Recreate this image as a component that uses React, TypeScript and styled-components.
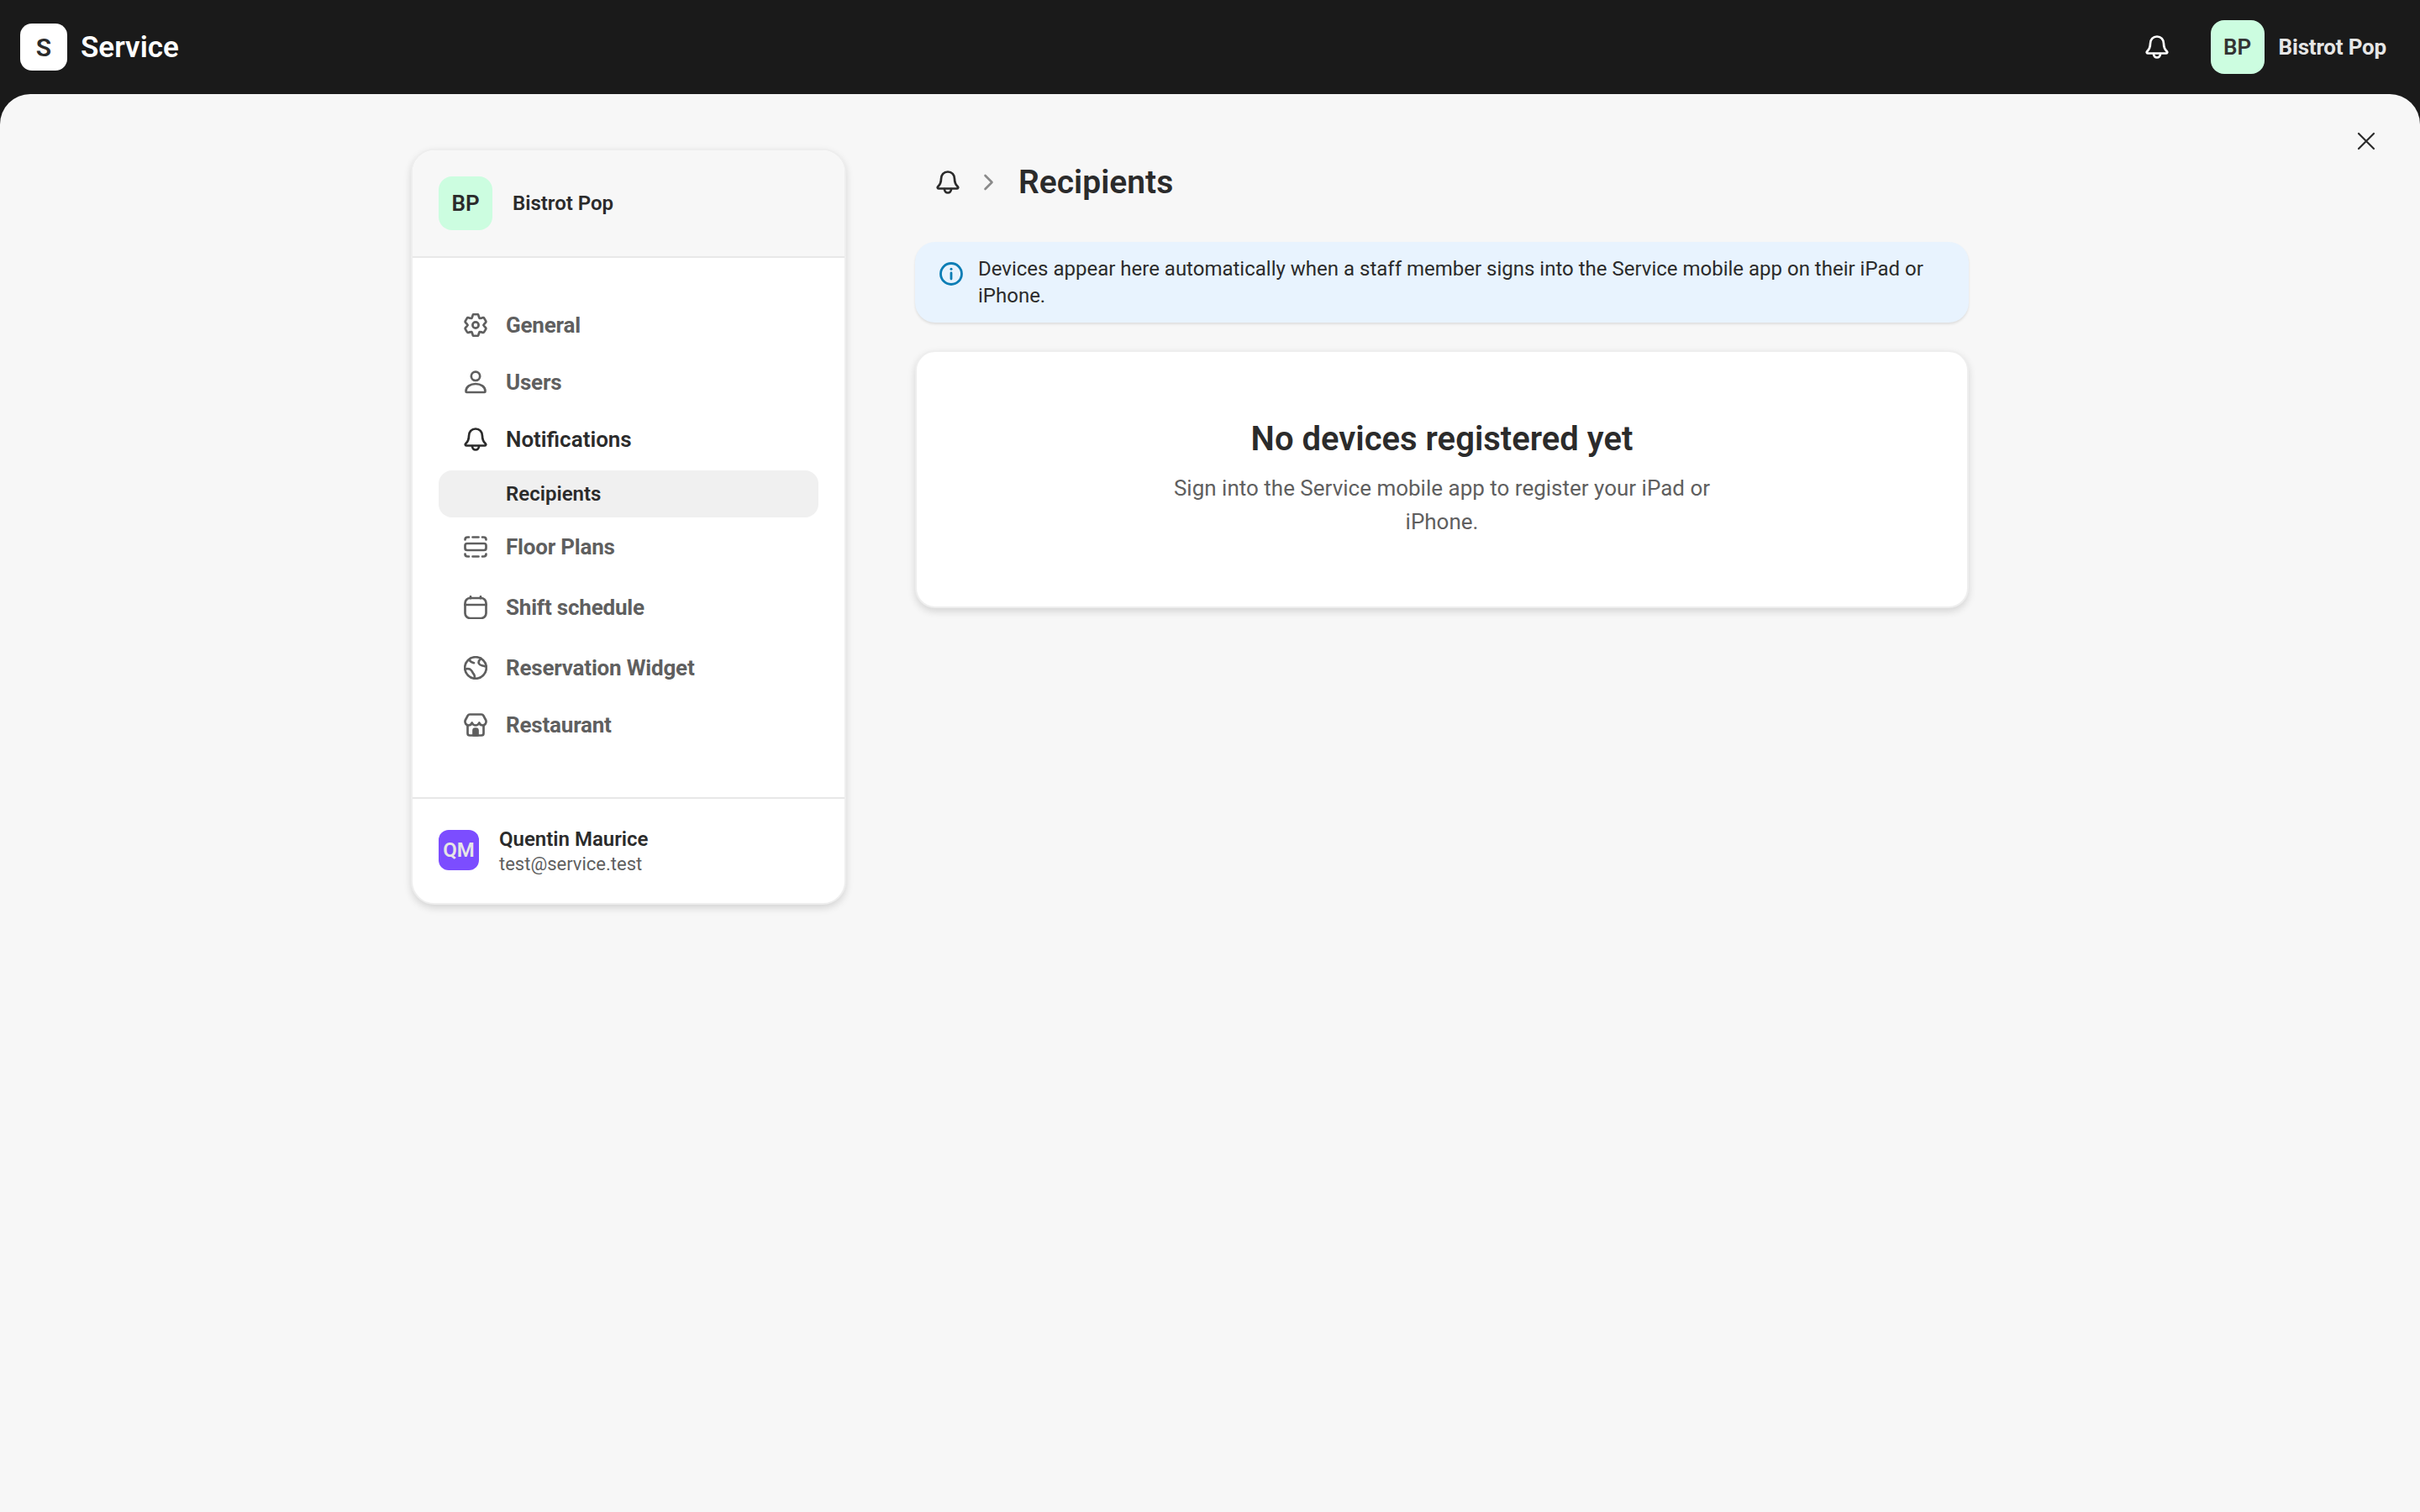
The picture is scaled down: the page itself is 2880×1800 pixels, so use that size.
import React from "react";
import styled, { createGlobalStyle } from "styled-components";

const GlobalStyle = createGlobalStyle`
  html, body {
    margin: 0;
    padding: 0;
    height: 100%;
    background: #1a1a1a;
    font-family: Roboto, "Liberation Sans", sans-serif;
  }
  * { box-sizing: border-box; }
`;

const Page = styled.div`
  width: 2880px;
  height: 1800px;
  display: flex;
  flex-direction: column;
  background: #1a1a1a;
  overflow: hidden;
`;

const TopBar = styled.header`
  height: 112px;
  flex: none;
  display: flex;
  align-items: center;
  justify-content: space-between;
  padding: 0 40px 0 24px;
`;

const Brand = styled.div`
  display: flex;
  align-items: center;
  gap: 16px;
`;

const LogoMark = styled.div`
  width: 56px;
  height: 56px;
  border-radius: 14px;
  background: #fff;
  color: #2b2b2b;
  display: flex;
  align-items: center;
  justify-content: center;
  font-size: 30px;
  font-weight: 600;
`;

const BrandName = styled.span`
  color: #fff;
  font-size: 35px;
  font-weight: 600;
`;

const TopRight = styled.div`
  display: flex;
  align-items: center;
`;

const TopBell = styled.div`
  color: #fff;
  display: flex;
  margin-right: 50px;
`;

const Avatar = styled.div<{ $size: number; $bg: string; $fg: string; $font: number; $radius: number }>`
  width: ${(p) => p.$size}px;
  height: ${(p) => p.$size}px;
  flex: none;
  border-radius: ${(p) => p.$radius}px;
  background: ${(p) => p.$bg};
  color: ${(p) => p.$fg};
  font-size: ${(p) => p.$font}px;
  font-weight: 600;
  display: flex;
  align-items: center;
  justify-content: center;
`;

const TopName = styled.span`
  color: #e6e6e6;
  font-size: 26px;
  font-weight: 700;
  letter-spacing: -0.2px;
  margin-left: 17px;
`;

const Sheet = styled.main`
  flex: 1;
  position: relative;
  background: #f7f7f7;
  border-radius: 36px 36px 0 0;
  display: flex;
  align-items: flex-start;
  padding: 65px 0 0 489px;
  gap: 82px;
`;

const CloseButton = styled.div`
  position: absolute;
  top: 45px;
  right: 53px;
  display: flex;
  color: #2b2b2b;
`;

const SideCard = styled.aside`
  width: 518px;
  flex: none;
  background: #fff;
  border: 2px solid #eeeeee;
  border-radius: 28px;
  box-shadow: 0 4px 10px rgba(0, 0, 0, 0.14);
  overflow: hidden;
`;

const SideHeader = styled.div`
  height: 128px;
  background: #f7f7f7;
  border-bottom: 2px solid #e8e8e8;
  display: flex;
  align-items: center;
  gap: 24px;
  padding: 0 30px 0 31px;
`;

const SideTitle = styled.span`
  font-size: 24px;
  font-weight: 600;
  color: #2b2b2b;
`;

const Nav = styled.nav`
  padding: 46px 31px 53px;
  display: flex;
  flex-direction: column;
`;

const NavRow = styled.div<{ $h: number; $active?: boolean }>`
  height: ${(p) => p.$h}px;
  display: flex;
  align-items: center;
  color: ${(p) => (p.$active ? "#2b2b2b" : "#5f5f5f")};
  font-size: 26px;
  font-weight: ${(p) => (p.$active ? 600 : 700)};
  letter-spacing: ${(p) => (p.$active ? "0" : "-0.2px")};
`;

const NavIcon = styled.div`
  width: 80px;
  flex: none;
  display: flex;
  justify-content: center;
  padding-left: 8px;
`;

const SubRow = styled.div`
  height: 56px;
  margin-top: 3px;
  padding-left: 80px;
  display: flex;
  align-items: center;
  background: #f0f0f0;
  border-radius: 16px;
  color: #2b2b2b;
  font-size: 24px;
  font-weight: 600;
`;

const SideFooter = styled.div`
  height: 126px;
  border-top: 2px solid #e8e8e8;
  display: flex;
  align-items: center;
  gap: 24px;
  padding: 0 31px 3px;
`;

const FooterText = styled.div`
  display: flex;
  flex-direction: column;
  gap: 3px;
  padding-top: 3px;
`;

const FooterName = styled.span`
  font-size: 24px;
  font-weight: 600;
  color: #2b2b2b;
`;

const FooterMail = styled.span`
  font-size: 22px;
  font-weight: 400;
  color: #5f5f5f;
`;

const Content = styled.section`
  width: 1254px;
  flex: none;
  display: flex;
  flex-direction: column;
`;

const Crumbs = styled.div`
  height: 111px;
  padding-left: 25px;
  display: flex;
  align-items: flex-start;
  color: #2b2b2b;
`;

const CrumbIcons = styled.div`
  display: flex;
  align-items: center;
  height: 80px;
  gap: 28px;
`;

const CrumbTitle = styled.h1`
  margin: 0 0 0 29px;
  font-size: 39px;
  line-height: 80px;
  font-weight: 600;
  color: #2b2b2b;
`;

const Notice = styled.div`
  height: 96px;
  background: #e8f3fe;
  border-radius: 24px;
  box-shadow: 0 2px 3px rgba(0, 0, 0, 0.1);
  display: flex;
  gap: 18px;
  padding: 16px 40px 0 29px;
  color: #2b2b2b;
  font-size: 24px;
  line-height: 32px;
`;

const NoticeIcon = styled.div`
  margin-top: 8px;
  color: #0b7db5;
  display: flex;
  flex: none;
`;

const EmptyCard = styled.div`
  margin-top: 33px;
  height: 307px;
  background: #fff;
  border: 2px solid #eeeeee;
  border-radius: 24px;
  box-shadow: 0 4px 10px rgba(0, 0, 0, 0.14);
  display: flex;
  flex-direction: column;
  align-items: center;
  padding-top: 76px;
`;

const EmptyTitle = styled.h2`
  margin: 0;
  font-size: 40px;
  line-height: 56px;
  font-weight: 600;
  color: #2b2b2b;
`;

const EmptyText = styled.p`
  margin: 10px 0 0;
  width: 680px;
  text-align: center;
  font-size: 26px;
  line-height: 40px;
  color: #5f5f5f;
`;

const Stroke = styled.svg`
  fill: none;
  stroke: currentColor;
  stroke-linecap: round;
  stroke-linejoin: round;
  display: block;
`;

const ChevronStroke = styled(Stroke)`
  color: #8a8a8a;
`;

const BellIcon = () => (
  <Stroke width="28" height="28" viewBox="0 0 28 28" strokeWidth="2.7">
    <path d="M14 1.500c-4.800 0-8 3.700-8 8.500 0 4.500-1 6.500-3.800 9.300-.9.9-.3 2.200 1 2.200h21.600c1.300 0 1.900-1.300 1-2.200-2.800-2.800-3.800-4.800-3.800-9.300 0-4.800-3.200-8.500-8-8.500z" />
    <path d="M10 22c0 2.800 1.800 4.500 4 4.500s4-1.700 4-4.500" />
  </Stroke>
);

const pt = (deg: number, r: number) => {
  const a = (deg * Math.PI) / 180;
  return `${(14 + r * Math.cos(a)).toFixed(2)} ${(14 + r * Math.sin(a)).toFixed(2)}`;
};

// six rounded teeth, one pointing straight up
const gearPath = () => {
  let d = `M${pt(-120, 9.4)}`;
  for (let k = 0; k < 6; k++) {
    const a = -90 + 60 * k;
    d += ` L${pt(a - 19, 11.2)} Q${pt(a - 15, 13.6)} ${pt(a - 7, 13)} L${pt(a + 7, 13)} Q${pt(a + 15, 13.6)} ${pt(a + 19, 11.2)} L${pt(a + 30, 9.4)}`;
  }
  return d + "z";
};

const GearIcon = () => (
  <Stroke width="28" height="28" viewBox="0 0 28 28" strokeWidth="2.7">
    <circle cx="14" cy="14" r="3.600" />
    <path d={gearPath()} />
  </Stroke>
);

const UserIcon = () => (
  <Stroke width="28" height="28" viewBox="0 0 28 28" strokeWidth="2.7">
    <circle cx="14" cy="6.800" r="5.200" />
    <path d="M2.500 25c0-5.500 5-9 11.500-9s11.500 3.500 11.500 9c0 .6-.4 1-1 1H3.500c-.6 0-1-.4-1-1z" />
  </Stroke>
);

const FloorIcon = () => (
  <Stroke width="28" height="28" viewBox="0 0 28 28" strokeWidth="2.7">
    <rect x="1.500" y="10" width="25" height="8" rx="2.500" />
    <path d="M1.500 5.500c0-2 1-3 3-3h1.500M10.500 2.500h7M22 2.500h1.500c2 0 3 1 3 3M1.500 22.500c0 2 1 3 3 3h1.500M10.500 25.500h7M22 25.500h1.500c2 0 3-1 3-3" />
  </Stroke>
);

const CalendarIcon = () => (
  <Stroke width="28" height="28" viewBox="0 0 28 28" strokeWidth="2.7">
    <rect x="1.500" y="3" width="25" height="24" rx="6" />
    <path d="M1.500 11h25M8 1.200v2M20 1.200v2" />
  </Stroke>
);

const GlobeIcon = () => (
  <Stroke width="28" height="28" viewBox="0 0 28 28" strokeWidth="2.7">
    <circle cx="14" cy="14" r="12.800" />
    <path d="M1.800 15.500c3-.8 5.500-.3 7 1.500s1.500 3 3 4.500c1 1 1.200 3 1 5.500" />
    <path d="M20.500 3c-2.500 2-3.500 4-2.500 6s3 2 4.500 2.500 3 1 4.500 1" />
    <path d="M6.500 4.200c1 2.500 3.500 3.500 5.500 4" />
  </Stroke>
);

const StoreIcon = () => (
  <Stroke width="28" height="28" viewBox="0 0 28 28" strokeWidth="2.7">
    <path d="M7 1.500h14c1 0 1.800.5 2.300 1.400l3 5.600c1 3.500-1.500 6-4 6-1.800 0-3.300-1.200-4-3-.8 1.800-2.300 3-4.300 3s-3.500-1.200-4.300-3c-.7 1.800-2.200 3-4 3-2.500 0-5-2.500-4-6l3-5.600C5.200 2 6 1.500 7 1.500z" />
    <path d="M4.500 14.500v9.500c0 1.700 1 2.500 2.500 2.500h14c1.500 0 2.500-.8 2.500-2.500v-9.500" />
    <path d="M11.500 26.500v-6c0-1.200.9-2 2-2h1c1.100 0 2 .8 2 2v6z" fill="currentColor" />
  </Stroke>
);

const InfoIcon = () => (
  <Stroke width="28" height="28" viewBox="0 0 28 28" strokeWidth="2.800">
    <circle cx="14" cy="14" r="12.500" />
    <path d="M14 13v7" />
    <circle cx="14" cy="8.300" r="1.500" fill="currentColor" stroke="none" />
  </Stroke>
);

const CloseIcon = () => (
  <Stroke width="22" height="22" viewBox="0 0 22 22" strokeWidth="2.2">
    <path d="M2 2l18 18M20 2L2 20" />
  </Stroke>
);

const Chevron = () => (
  <ChevronStroke width="13" height="20" viewBox="0 0 13 20" strokeWidth="2.6">
    <path d="M2.500 2l8 8-8 8" />
  </ChevronStroke>
);

export default function App() {
  return (
    <Page>
      <GlobalStyle />
      <TopBar>
        <Brand>
          <LogoMark>S</LogoMark>
          <BrandName>Service</BrandName>
        </Brand>
        <TopRight>
          <TopBell><BellIcon /></TopBell>
          <Avatar $size={64} $radius={16} $bg="#ccfde0" $fg="#333" $font={26}>BP</Avatar>
          <TopName>Bistrot Pop</TopName>
        </TopRight>
      </TopBar>
      <Sheet>
        <CloseButton><CloseIcon /></CloseButton>
        <SideCard>
          <SideHeader>
            <Avatar $size={64} $radius={16} $bg="#ccfde0" $fg="#2b2b2b" $font={26}>BP</Avatar>
            <SideTitle>Bistrot Pop</SideTitle>
          </SideHeader>
          <Nav>
            <NavRow $h={68}><NavIcon><GearIcon /></NavIcon>General</NavRow>
            <NavRow $h={68}><NavIcon><UserIcon /></NavIcon>Users</NavRow>
            <NavRow $h={68} $active><NavIcon><BellIcon /></NavIcon>Notifications</NavRow>
            <SubRow>Recipients</SubRow>
            <NavRow $h={70}><NavIcon><FloorIcon /></NavIcon>Floor Plans</NavRow>
            <NavRow $h={74}><NavIcon><CalendarIcon /></NavIcon>Shift schedule</NavRow>
            <NavRow $h={70}><NavIcon><GlobeIcon /></NavIcon>Reservation Widget</NavRow>
            <NavRow $h={66}><NavIcon><StoreIcon /></NavIcon>Restaurant</NavRow>
          </Nav>
          <SideFooter>
            <Avatar $size={48} $radius={12} $bg="#7c4dff" $fg="#e6e6e6" $font={24}>QM</Avatar>
            <FooterText>
              <FooterName>Quentin Maurice</FooterName>
              <FooterMail>test@service.test</FooterMail>
            </FooterText>
          </SideFooter>
        </SideCard>
        <Content>
          <Crumbs>
            <CrumbIcons>
              <BellIcon />
              <Chevron />
            </CrumbIcons>
            <CrumbTitle>Recipients</CrumbTitle>
          </Crumbs>
          <Notice>
            <NoticeIcon><InfoIcon /></NoticeIcon>
            <span>Devices appear here automatically when a staff member signs into the Service mobile app on their iPad or iPhone.</span>
          </Notice>
          <EmptyCard>
            <EmptyTitle>No devices registered yet</EmptyTitle>
            <EmptyText>Sign into the Service mobile app to register your iPad or iPhone.</EmptyText>
          </EmptyCard>
        </Content>
      </Sheet>
    </Page>
  );
}
